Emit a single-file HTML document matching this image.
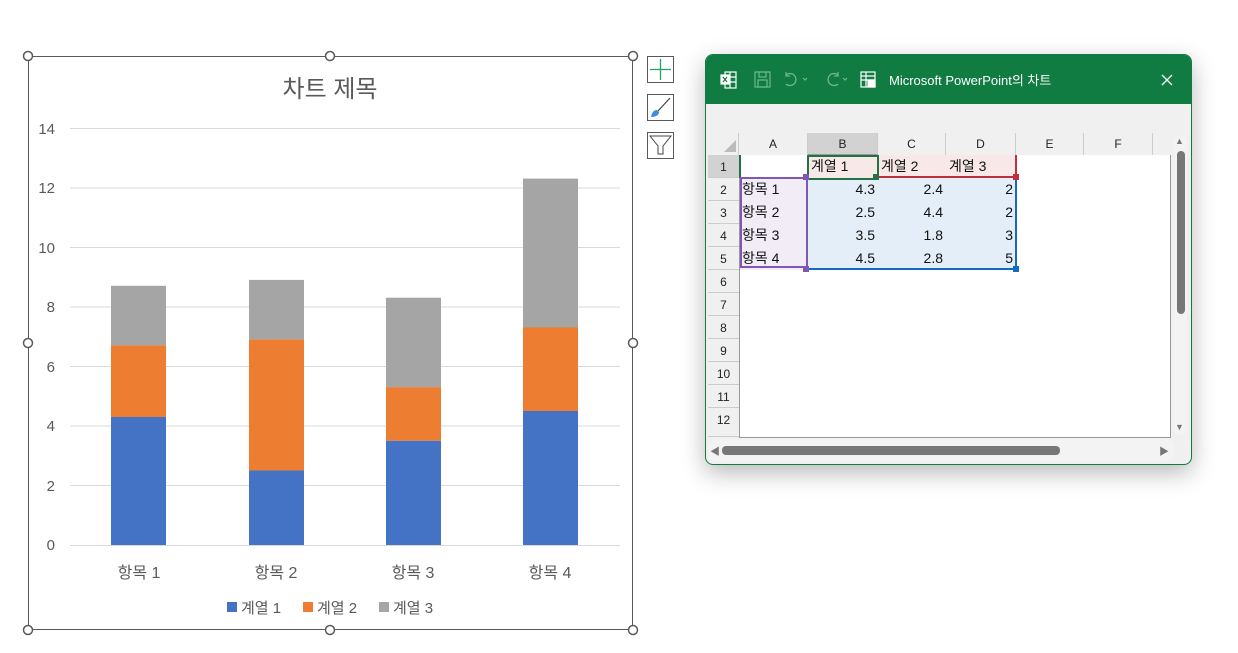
<!DOCTYPE html>
<html><head><meta charset="utf-8"><style>
body{margin:0;width:1238px;height:653px;background:#fff;position:relative;overflow:hidden;font-family:"Liberation Sans","Noto Sans CJK KR",sans-serif}
.a{position:absolute}
.win{left:705px;top:54px;width:485px;height:409px;border:1px solid #107c41;border-radius:8px;background:#f0f0f0;overflow:hidden;box-shadow:0 8px 24px rgba(0,0,0,.28)}
.tb{left:0;top:0;width:485px;height:49px;background:#107c41;color:#fff}
.ch{top:78px;height:22px;background:#f0f0f0;border-right:1px solid #ccc;font-size:12px;color:#222;text-align:center;line-height:22px;box-sizing:border-box}
.rh{left:2px;width:31px;height:23px;border-bottom:1px solid #ccc;font-size:12px;color:#222;text-align:center;line-height:24px;box-sizing:border-box;background:#f0f0f0}
.c{font-size:14px;color:#111;height:23px;line-height:23px}
</style></head><body>
<svg class="a" style="left:0;top:0" width="700" height="653" font-family="Liberation Sans, Noto Sans CJK KR, sans-serif">
<rect x="28.5" y="56.5" width="604" height="573" fill="none" stroke="#595959"/>
<g fill="#fff" stroke="#595959" stroke-width="1.5">
<circle cx="28" cy="56" r="4.5"/><circle cx="330" cy="56" r="4.5"/><circle cx="633" cy="56" r="4.5"/>
<circle cx="28" cy="343" r="4.5"/><circle cx="633" cy="343" r="4.5"/>
<circle cx="28" cy="630" r="4.5"/><circle cx="330" cy="630" r="4.5"/><circle cx="633" cy="630" r="4.5"/></g>
<text x="330" y="97" font-size="24" fill="#595959" text-anchor="middle">차트 제목</text>
<g stroke="#d9d9d9"><line x1="70" x2="620" y1="128.5" y2="128.5"/><line x1="70" x2="620" y1="188" y2="188"/><line x1="70" x2="620" y1="247.5" y2="247.5"/><line x1="70" x2="620" y1="307" y2="307"/><line x1="70" x2="620" y1="366.5" y2="366.5"/><line x1="70" x2="620" y1="426" y2="426"/><line x1="70" x2="620" y1="485.5" y2="485.5"/><line x1="70" x2="620" y1="545.5" y2="545.5"/></g>
<g font-size="15" fill="#595959" text-anchor="end"><text x="55" y="134">14</text><text x="55" y="193">12</text><text x="55" y="253">10</text><text x="55" y="312">8</text><text x="55" y="372">6</text><text x="55" y="431">4</text><text x="55" y="491">2</text><text x="55" y="550">0</text></g>
<g fill="#4472c4"><rect x="111" y="417" width="55" height="128"/><rect x="249" y="470.5" width="55" height="74.5"/><rect x="386" y="440.7" width="55" height="104.3"/><rect x="523" y="411" width="55" height="134"/></g>
<g fill="#ed7d31"><rect x="111" y="345.4" width="55" height="71.6"/><rect x="249" y="339.4" width="55" height="131.1"/><rect x="386" y="387.1" width="55" height="53.6"/><rect x="523" y="327.5" width="55" height="83.5"/></g>
<g fill="#a5a5a5"><rect x="111" y="285.8" width="55" height="59.6"/><rect x="249" y="279.9" width="55" height="59.5"/><rect x="386" y="297.7" width="55" height="89.4"/><rect x="523" y="178.6" width="55" height="148.9"/></g>
<g font-size="16" fill="#595959" text-anchor="middle"><text x="139" y="578">항목 1</text><text x="276" y="578">항목 2</text><text x="413" y="578">항목 3</text><text x="550" y="578">항목 4</text></g>
<rect x="227" y="602" width="10" height="10" fill="#4472c4"/><rect x="303" y="602" width="10" height="10" fill="#ed7d31"/><rect x="379" y="602" width="10" height="10" fill="#a5a5a5"/>
<g font-size="15" fill="#595959"><text x="241" y="613">계열 1</text><text x="317" y="613">계열 2</text><text x="393" y="613">계열 3</text></g>
<g fill="#fff" stroke="#595959"><rect x="647.5" y="56.5" width="26" height="26"/><rect x="647.5" y="94.5" width="26" height="26"/><rect x="647.5" y="132.5" width="26" height="26"/></g>
<path d="M660.5 59v21M650 69.5h21" stroke="#21a366" stroke-width="1.3"/>
<path d="M670 98l-12 13" stroke="#444" stroke-width="1.2"/><path d="M651 117c1-5 3-7 6-7l2 2c0 3-3 5-8 5z" fill="#3f8be0"/>
<path d="M650 136h21l-8 10v8h-5v-8z" fill="none" stroke="#444"/>
</svg>
<div class="a win">
<div class="a tb">
<svg class="a" style="left:14px;top:14px" width="170" height="22" fill="none" stroke="#fff" stroke-width="1.2">
<rect x="5" y="3" width="11" height="16"/><path d="M5 8h11M5 13h11M10 3v16"/><rect x="1" y="6" width="8" height="9" fill="#fff"/><path d="M3 8l4 5M7 8l-4 5" stroke="#107c41"/>
<g stroke="#6fb78f"><rect x="35" y="3" width="15" height="15"/><rect x="39" y="3" width="7" height="5"/><rect x="38" y="11" width="9" height="7"/>
<path d="M66 6a6 6 0 1 1 0 9M66 3v4h4M83 9l2 2 2-2"/><path d="M118 6a6 6 0 1 0 0 9M118 3v4h-4M123 9l2 2 2-2"/></g>
<rect x="141" y="3" width="14" height="15"/><path d="M141 7h14M141 11h14M146 3v15"/><rect x="148" y="11" width="7" height="7" fill="#fff"/>
</svg>
<div class="a" style="left:183px;top:15px;font-size:13px">Microsoft PowerPoint의 차트</div>
<svg class="a" style="left:455px;top:19px" width="12" height="12" stroke="#fff" stroke-width="1.3"><path d="M1 1l10 10M11 1L1 11"/></svg>
</div>
<div class="a" style="left:2px;top:78px;width:31px;height:22px;background:#f0f0f0;border-right:1px solid #ccc;box-sizing:border-box"><svg width="31" height="22"><path d="M28 19H16L28 7z" fill="#bbb"/></svg></div>
<div class="a ch" style="left:33px;width:69px">A</div>
<div class="a ch" style="left:102px;width:70px;background:#d2d2d2;border-bottom:1px solid #999">B</div>
<div class="a ch" style="left:172px;width:68px">C</div>
<div class="a ch" style="left:240px;width:70px">D</div>
<div class="a ch" style="left:310px;width:68px">E</div>
<div class="a ch" style="left:378px;width:69px">F</div>
<div class="a" style="left:33px;top:100px;width:430px;height:282px;background:#fff;border-right:1px solid #999;border-bottom:1px solid #999;border-left:1px solid #999"></div>
<div class="a rh" style="top:100px;background:#d2d2d2">1</div>
<div class="a rh" style="top:123px">2</div><div class="a rh" style="top:146px">3</div><div class="a rh" style="top:169px">4</div><div class="a rh" style="top:192px">5</div><div class="a rh" style="top:215px">6</div><div class="a rh" style="top:238px">7</div><div class="a rh" style="top:261px">8</div><div class="a rh" style="top:284px">9</div><div class="a rh" style="top:307px">10</div><div class="a rh" style="top:330px">11</div><div class="a rh" style="top:353px;height:29px">12</div>
<div class="a" style="left:102px;top:100px;width:208px;height:23px;background:#f9e8e8"></div>
<div class="a" style="left:34px;top:123px;width:68px;height:92px;background:#f1ecf6"></div>
<div class="a" style="left:102px;top:123px;width:208px;height:92px;background:#e4eef8"></div>
<div class="a" style="left:33px;top:100px;width:1px;height:23px;border-left:2px solid #217346"></div>
<div class="a" style="left:101px;top:100px;width:68px;height:21px;border:2px solid #217346"></div>
<div class="a" style="left:170px;top:121px;width:140px;height:2px;background:#c0303a"></div>
<div class="a" style="left:309px;top:100px;width:2px;height:23px;background:#c0303a"></div>
<div class="a" style="left:34px;top:122px;width:68px;height:91px;border:2px solid #8057b4;box-sizing:border-box"></div>
<div class="a" style="left:102px;top:213px;width:208px;height:2px;background:#1469c0"></div>
<div class="a" style="left:309px;top:123px;width:2px;height:92px;background:#1469c0"></div>
<div class="a" style="left:97px;top:119px;width:6px;height:6px;background:#8057b4"></div>
<div class="a" style="left:97px;top:211px;width:6px;height:6px;background:#8057b4"></div>
<div class="a" style="left:167px;top:119px;width:6px;height:6px;background:#217346"></div>
<div class="a" style="left:307px;top:119px;width:6px;height:6px;background:#c0303a"></div>
<div class="a" style="left:307px;top:211px;width:6px;height:6px;background:#1469c0"></div>
<div class="a c" style="left:105px;top:100px">계열 1</div><div class="a c" style="left:175px;top:100px">계열 2</div><div class="a c" style="left:243px;top:100px">계열 3</div>
<div class="a c" style="left:36px;top:123px">항목 1</div><div class="a c" style="left:36px;top:146px">항목 2</div><div class="a c" style="left:36px;top:169px">항목 3</div><div class="a c" style="left:36px;top:192px">항목 4</div>
<div class="a c" style="left:102px;top:123px;width:67px;text-align:right">4.3<br>2.5<br>3.5<br>4.5</div>
<div class="a c" style="left:172px;top:123px;width:65px;text-align:right">2.4<br>4.4<br>1.8<br>2.8</div>
<div class="a c" style="left:240px;top:123px;width:67px;text-align:right">2<br>2<br>3<br>5</div>
<div class="a" style="left:467px;top:80px;width:14px;height:300px;background:#f3f3f3;border-radius:7px"></div>
<div class="a" style="left:471px;top:96px;width:8px;height:163px;background:#777;border-radius:4px"></div>
<div class="a" style="left:469px;top:81px;font-size:9px;color:#777">▲</div>
<div class="a" style="left:469px;top:367px;font-size:9px;color:#777">▼</div>
<div class="a" style="left:3px;top:384px;width:465px;height:22px;background:#f3f3f3;border-radius:7px"></div>
<div class="a" style="left:16px;top:391px;width:338px;height:9px;background:#777;border-radius:4px"></div>
<div class="a" style="left:4px;top:388px;font-size:10px;color:#777">◀</div>
<div class="a" style="left:453px;top:388px;font-size:10px;color:#777">▶</div>
</div>
</body></html>
